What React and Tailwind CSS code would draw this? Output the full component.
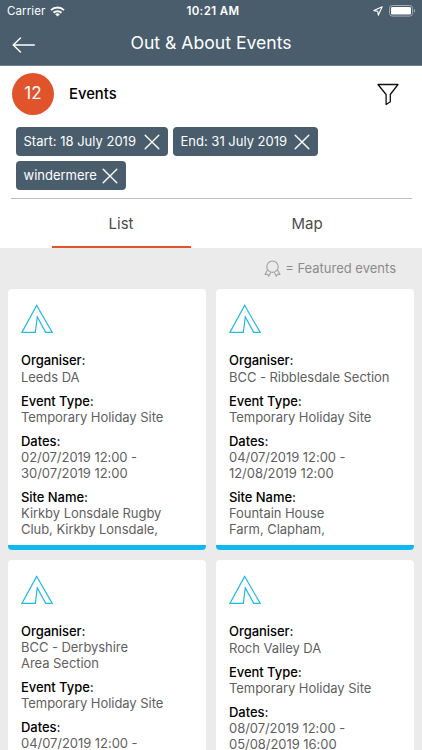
import React, { useState } from "react";

const FILTERS = [
	{ label: "Start: 18 July 2019", className: "w-[152px]", text: "w-[115px]" },
	{ label: "End: 31 July 2019", className: "w-[145px]", text: "w-[108px]" },
	{ label: "windermere", className: "w-[110px]", text: "w-[73px]" },
];

const EVENTS = [
	{
		organiser: ["Leeds DA"],
		type: "Temporary Holiday Site",
		dates: ["02/07/2019 12:00 -", "30/07/2019 12:00"],
		site: ["Kirkby Lonsdale Rugby", "Club, Kirkby Lonsdale,"],
	},
	{
		organiser: ["BCC - Ribblesdale Section"],
		type: "Temporary Holiday Site",
		dates: ["04/07/2019 12:00 -", "12/08/2019 12:00"],
		site: ["Fountain House", "Farm, Clapham,"],
	},
	{
		organiser: ["BCC - Derbyshire", "Area Section"],
		type: "Temporary Holiday Site",
		dates: ["04/07/2019 12:00 -"],
		site: [],
	},
	{
		organiser: ["Roch Valley DA"],
		type: "Temporary Holiday Site",
		dates: ["08/07/2019 12:00 -", "05/08/2019 16:00"],
		site: [],
	},
];

const StatusBar = () => (
	<div className="h-[22px] grid grid-cols-3 items-center pl-[7px] pr-[6px] text-[11.5px]">
		<div className="flex items-center gap-[5px]">
			<span className="tracking-[0.1px] pt-px">Carrier</span>
			<svg width="15" height="11" viewBox="0 0 15 11" fill="none" stroke="currentColor" strokeWidth="2">
				<path d="M1 4.1a9.4 9.4 0 0 1 13 0" />
				<path d="M3.5 6.8a5.8 5.8 0 0 1 8 0" />
				<path d="M7.5 10.6 5.2 8.3a3.4 3.4 0 0 1 4.6 0z" fill="currentColor" stroke="none" />
			</svg>
		</div>
		<span className="text-center font-semibold whitespace-nowrap pt-px pl-[3px] tracking-[0.4px]">10:21 AM</span>
		<div className="flex items-center justify-end gap-[6px]">
			<svg width="10" height="10" viewBox="0 0 10 10" fill="none" stroke="currentColor" strokeWidth="1.1" strokeLinejoin="round">
				<path d="M9.2.8.9 4.6l3.9.6.5 4z" />
			</svg>
			<svg width="27" height="12" viewBox="0 0 27 12" fill="none">
				<rect x=".5" y=".5" width="23" height="10.6" rx="2.8" stroke="#a0abb4" />
				<rect x="2" y="2" width="20" height="7.6" rx="1.4" fill="#fff" />
				<path d="M25 4v3.8c1.6-.6 1.6-3.2 0-3.8" fill="#a0abb4" />
			</svg>
		</div>
	</div>
);

const Header = () => (
	<header className="h-[66px] bg-[#495d6d] border-b border-[#748390] text-white">
		<StatusBar />
		<div className="h-[43px] grid grid-cols-[48px_1fr_48px] items-center">
			<button className="pl-[12px] pt-[2px]">
				<svg width="24" height="16" viewBox="0 0 24 16" fill="none" stroke="currentColor" strokeWidth="1.4" strokeLinecap="round" strokeLinejoin="round">
					<path d="M22.3 8H1.2M8.5 1 1.2 8l7.3 7" />
				</svg>
			</button>
			<h1 className="text-center text-[17.6px]">Out &amp; About Events</h1>
		</div>
	</header>
);

const Tent = () => (
	<svg className="block" width="32" height="30" viewBox="0 0 32 30" fill="none" stroke="#25b9e8" strokeWidth="1.2">
		<path d="M15.7 1.4.9 28.4h13.4L16.3 13l8.4 15.4h6.5z" />
	</svg>
);

const Field = ({ label, lines, valueClass = "" }) => (
	<div className="mb-2">
		<h3 className="font-medium text-black">{label}</h3>
		<div className={`text-[#5f5f5f] ${valueClass}`}>
			{lines.map((line) => (
				<p key={line}>{line}</p>
			))}
		</div>
	</div>
);

const EventCard = ({ event }) => (
	<article className="h-[261px] bg-white rounded-[4px] overflow-hidden flex flex-col">
		<div className="flex-1 min-h-0 overflow-hidden px-[13px] pt-[15px] text-[13px] leading-[16px] tracking-[-0.05px] whitespace-nowrap">
			<Tent />
			<div className="pt-[18px]">
				<Field
					label="Organiser:"
					lines={event.organiser}
					valueClass={event.organiser.length === 1 ? "pt-px" : ""}
				/>
				<Field label="Event Type:" lines={[event.type]} />
				<Field label="Dates:" lines={event.dates} />
				{event.site.length > 0 && <Field label="Site Name:" lines={event.site} />}
			</div>
		</div>
		<div className="h-[5px] shrink-0 bg-[#0fb9ef]" />
	</article>
);

const App = () => {
	const [tab, setTab] = useState("List");

	return (
		<div className="w-full h-[750px] overflow-hidden bg-[#ebebeb] font-['Inter','Liberation_Sans',sans-serif]">
			<Header />

			<section className="h-[182px] bg-white flex flex-col">
				<div className="h-[61px] flex items-center pl-[12px] pr-[23px] pb-[5px]">
					<div className="w-[42px] h-[42px] rounded-full bg-[#e0532b] text-white text-[17px] flex items-center justify-center">
						12
					</div>
					<h2 className="ml-[15px] text-[14.8px] font-medium text-black">Events</h2>
					<svg className="ml-auto" width="22" height="23" viewBox="0 0 22 23" fill="none" stroke="#111" strokeWidth="1.3" strokeLinejoin="round">
						<path d="M1 1.5h20l-7.7 10v7.2l-4.2 2.8v-10z" />
					</svg>
				</div>

				<div className="flex flex-wrap gap-[5px] pl-[15.5px] pr-4">
					{FILTERS.map((filter) => (
						<button
							key={filter.label}
							className={`h-[29px] px-2 rounded-[4px] bg-[#495d6d] text-white text-[13px] flex items-center justify-between whitespace-nowrap ${filter.className}`}
						>
							<span className={`text-left ${filter.text}`}>{filter.label}</span>
							<svg width="16" height="16" viewBox="0 0 16 16" stroke="currentColor" strokeWidth="1.4" strokeLinecap="round">
								<path d="m1.2 1.2 13.6 13.6M14.8 1.2 1.2 14.8" />
							</svg>
						</button>
					))}
				</div>

				<div className="mx-[10.5px] mt-[8px] h-px shrink-0 bg-[#bdbdbd]" />

				<nav className="flex-1 flex justify-center pl-[28px] pr-[22px]">
					{["List", "Map"].map((name) => (
						<button
							key={name}
							onClick={() => setTab(name)}
							className="flex-1 flex flex-col items-center text-[15px] text-[#4c4c4c]"
						>
							<span className="flex-1 flex items-center pt-[4px]">{name}</span>
							<span className={tab === name ? "w-[139px] h-[2px] bg-[#e0532b]" : "h-[2px]"} />
						</button>
					))}
				</nav>
			</section>

			<div className="h-[41px] flex items-center justify-end gap-[4px] pr-[26px] text-[13px] text-[#8b8b8b]">
				<svg width="17" height="17" viewBox="0 0 17 17" fill="none" stroke="#a2a2a2" strokeWidth="1.1" strokeLinejoin="round">
					<circle cx="8.5" cy="6.7" r="5.7" />
					<path d="M3.6 9.8 1 14.5l2.5-.3 1.2 2.1 2.1-4.1" />
					<path d="m13.4 9.8 2.6 4.7-2.5-.3-1.2 2.1-2.1-4.1" />
				</svg>
				<span>= Featured events</span>
			</div>

			<main className="grid grid-cols-2 gap-[10px] pl-[8px] pr-[8px]">
				{EVENTS.map((event, index) => (
					<EventCard key={index} event={event} />
				))}
			</main>
		</div>
	);
};

export default App;
